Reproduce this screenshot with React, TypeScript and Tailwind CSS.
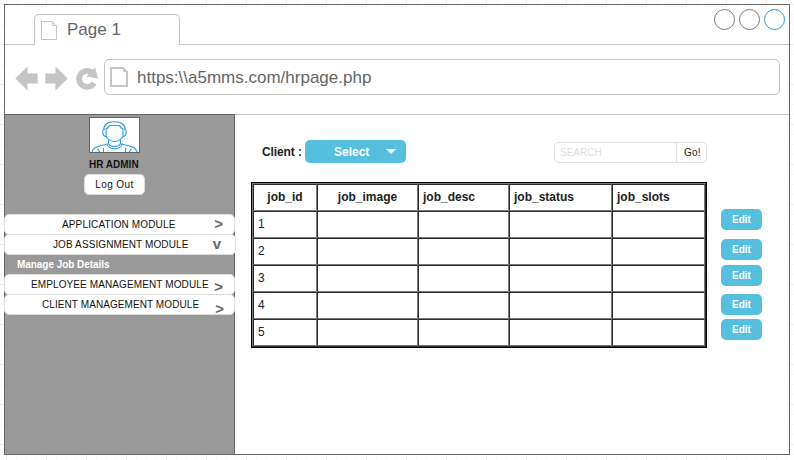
import React from "react";

const columns = ["job_id", "job_image", "job_desc", "job_status", "job_slots"];
const rows = [1, 2, 3, 4, 5];

function PageIcon({ w, h, sw }: { w: number; h: number; sw: number }) {
  const o = sw / 2;
  return (
    <svg width={w} height={h} viewBox={`0 0 ${w} ${h}`} fill="none" stroke="#c4c4c4" strokeWidth={sw} className="shrink-0">
      <path d={`M${o} ${o}H${w - 5}L${w - o} ${5}V${h - o}H${o}Z`} />
      <path d={`M${w - 4.5} ${o}V4.500H${w - o}`} strokeWidth="1" />
    </svg>
  );
}

function Avatar() {
  return (
    <svg width="49" height="34" viewBox="0 0 49 34" fill="none" stroke="#2a9af8" strokeWidth="1.1">
      <path d="M14 12C13.500 7 17 3.800 24.500 3.800S35.500 7 35 12" />
      <path d="M16 18V11C18 10.500 18.500 9 19.500 7.500H29.500C30.500 9 31 10.500 33 11V18C32 21 28 23.500 24.500 23.500S17 21 16 18Z" />
      <path d="M14.500 11C11.500 11 12.500 19 16 18.500M34.500 11C37.500 11 36.500 19 33 18.500" />
      <path d="M18.500 21.500V26C21 29.200 28 29.200 30.500 26V21.500" />
      <path d="M17 25.500C17.500 32.500 31.500 32.500 32 25.500" />
      <path d="M17 26C9 28.500 3.500 28 2 34M32 26C40 28.500 45.500 28 47 34M7.500 30.500L10 34M41.500 30.500L39 34M13.500 30V34M35.500 30V34" />
    </svg>
  );
}

function MenuItem({ label, className, textClass, mark, markClass }: { label: string; className: string; textClass: string; mark: string; markClass: string }) {
  return (
    <div className={`flex h-[21px] shrink-0 items-center rounded-[5px] border border-[#ddd] bg-white text-[10px] leading-[20px] text-[#111] ${className}`}>
      <span className={`whitespace-nowrap ${textClass}`}>{label}</span>
      <span className={`ml-auto text-[15px] leading-none font-bold text-[#666] ${markClass}`}>{mark}</span>
    </div>
  );
}

function Edit({ className }: { className: string }) {
  return (
    <button className={`flex h-[21px] w-[41px] shrink-0 items-center justify-center rounded-[5px] bg-[#55bfe0] text-[10px] font-bold text-white ${className}`}>
      Edit
    </button>
  );
}

export default function App() {
  return (
    <div className="h-[460px] w-[794px] overflow-hidden bg-white bg-[linear-gradient(90deg,#ececec_1px,transparent_1px),linear-gradient(#ececec_1px,transparent_1px),linear-gradient(90deg,#f8f8f8_1px,transparent_1px),linear-gradient(#f8f8f8_1px,transparent_1px)] bg-[size:40px_40px,40px_40px,10px_10px,10px_10px] bg-[position:6px_4px,6px_4px,6px_4px,6px_4px] p-1 font-['Liberation_Sans',Arial,sans-serif]">
      <div className="flex h-[451px] w-[786px] flex-col border border-[#666] bg-white">
        <div className="flex h-10 shrink-0 items-end">
          <div className="w-[29px] border-b border-[#c4c4c4]" />
          <div className="flex h-[31px] w-[146px] items-start rounded-t-[5px] border-x border-t border-[#c4c4c4] pt-[6px] pl-[6px]">
            <PageIcon w={16} h={19} sw={1} />
            <span className="-mt-px ml-[10px] text-[17px] leading-[19px] text-[#666]">Page 1</span>
          </div>
          <div className="flex h-10 flex-1 justify-end gap-1 border-b border-[#c4c4c4] pt-1 pr-[4px]">
            <div className="size-[21px] rounded-full border border-[#777]" />
            <div className="size-[21px] rounded-full border border-[#777]" />
            <div className="size-[21px] rounded-full border border-[#2196f3]" />
          </div>
        </div>

        <div className="flex h-[69px] shrink-0 pt-[14px] pl-[10px]">
          <svg width="84" height="36" viewBox="15 59 84 36" className="shrink-0">
            <path d="M15.300 78.500L27.500 66.500V73.500H37.700V83.500H27.500V90.500ZM67.700 78.500L55.500 66.500V73.500H45.300V83.500H55.500V90.500Z" fill="#c4c4c4" />
            <path d="M93 73.500A8 8 0 1 0 94 83" fill="none" stroke="#c4c4c4" strokeWidth="5.800" />
            <path d="M95 67.300L98 78.500L86.500 76.500Z" fill="#c4c4c4" />
          </svg>
          <div className="ml-[5px] flex h-9 w-[676px] items-center rounded-[5px] border border-[#c4c4c4] pl-[5px]">
            <PageIcon w={18} h={20} sw={2} />
            <span className="mt-px ml-[9px] text-[17px] text-[#666]">https:\\a5mms.com/hrpage.php</span>
          </div>
        </div>

        <div className="flex min-h-0 flex-1">
          <aside className="flex w-[230px] shrink-0 flex-col border-t border-r border-[#666] bg-[#999]">
            <div className="mt-[2px] ml-[84px] h-[36px] w-[51px] shrink-0 border border-[#666] bg-white"><Avatar /></div>
            <div className="mt-[6px] ml-[84px] h-3 shrink-0 text-[10px] leading-[12px] font-bold text-[#111]">HR ADMIN</div>
            <button className="mt-[3px] ml-[79px] h-[21px] w-[61px] shrink-0 rounded-[5px] border border-[#ddd] bg-white text-[10px] leading-[19px] tracking-[0.4px] text-[#111]">Log Out</button>
            <nav className="mt-[19px] -ml-px flex flex-col">
              <MenuItem label="APPLICATION MODULE" className="w-[231px]" textClass="ml-[57px] tracking-[0.14px]" mark=">" markClass="mr-[11px] -mt-0.5" />
              <MenuItem label="JOB ASSIGNMENT MODULE" className="-mt-px w-[232px]" textClass="ml-[48px] tracking-[0.11px]" mark="v" markClass="mr-[14px] -mt-0.5" />
              <div className="h-[19px] pl-[13px] text-[10px] leading-[20px] font-bold tracking-[-0.05px] text-white">Manage Job Details</div>
              <MenuItem label="EMPLOYEE MANAGEMENT MODULE" className="w-[231px]" textClass="ml-[26px] tracking-[0.11px]" mark=">" markClass="mr-[11px] mt-1" />
              <MenuItem label="CLIENT MANAGEMENT MODULE" className="-mt-px w-[231px]" textClass="ml-[37px] tracking-[0.08px]" mark=">" markClass="mr-[10px] mt-2" />
            </nav>
          </aside>

          <main className="flex flex-1 flex-col border-t border-[#c4c4c4]">
            <div className="mt-[25px] flex h-[23px] shrink-0 pl-[27px]">
              <span className="w-[43px] text-[12px] leading-[24px] font-bold tracking-[-0.1px] whitespace-nowrap text-[#222]">Client :</span>
              <button className="flex w-[101px] items-center rounded-[5px] bg-[#55bfe0] pl-[29px] text-[12px] font-bold text-white">
                Select
                <svg width="10" height="5" viewBox="0 0 10 5" className="ml-[17px]"><path d="M0 0H10L5 5Z" fill="white" /></svg>
              </button>
              <div className="mt-[2px] ml-[148px] flex h-[21px] w-[153px] rounded-[5px] border border-[#ddd] text-[10px] leading-[20px]">
                <span className="w-[122px] border-r border-[#ddd] pl-[5px] text-[#ddd]">SEARCH</span>
                <span className="pl-[7px] tracking-[0.2px] text-[#222]">Go!</span>
              </div>
            </div>

            <div className="mt-[19px] flex pl-[16px]">
              <div className="h-[166px] w-[456px] border border-black">
                <div className="border border-t-[#777] border-r-[#2b2b2b] border-b-[#2b2b2b] border-l-[#777]">
                  <table className="h-[162px] w-[452px] table-fixed border-separate border-spacing-0 text-[12px] text-[#222]">
                    <colgroup>
                      <col className="w-[64px]" /><col className="w-[101px]" /><col className="w-[91px]" /><col className="w-[103px]" /><col className="w-[93px]" />
                    </colgroup>
                    <thead>
                      <tr className="h-[27px]">
                        {columns.map((c, i) => (
                          <th key={c} className={`border border-t-[#2b2b2b] border-r-[#777] border-b-[#777] border-l-[#2b2b2b] p-0 pb-0.5 font-bold ${i < 2 ? "text-center" : "pl-1 text-left"}`}>{c}</th>
                        ))}
                      </tr>
                    </thead>
                    <tbody>
                      {rows.map((r) => (
                        <tr key={r} className="h-[27px]">
                          {columns.map((c, i) => (
                            <td key={c} className="border border-t-[#2b2b2b] border-r-[#777] border-b-[#777] border-l-[#2b2b2b] p-0 pb-0.5 pl-1">{i === 0 ? r : ""}</td>
                          ))}
                        </tr>
                      ))}
                    </tbody>
                  </table>
                </div>
              </div>
              <div className="mt-[27px] ml-[14px] flex flex-col">
                <Edit className="" />
                <Edit className="mt-[9px]" />
                <Edit className="mt-[5px]" />
                <Edit className="mt-[8px]" />
                <Edit className="mt-[4px]" />
              </div>
            </div>
          </main>
        </div>
      </div>
    </div>
  );
}
